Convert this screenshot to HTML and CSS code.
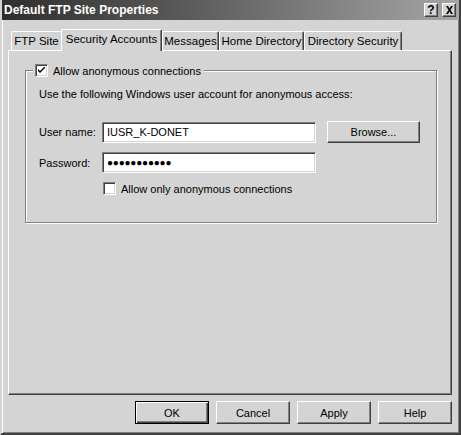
FILE: index.html
```html
<!DOCTYPE html>
<html lang="en">

<head>
    <meta charset="UTF-8">
    <title>Default FTP Site Properties</title>
    <link rel="stylesheet" href="styles.css">
</head>

<body>

    <div class="window">
        <div class="titlebar">
            <span class="titleText">Default FTP Site Properties</span>
            <div class="titleButtons">
                <span class="titleButton">?</span>
                <span class="titleButton">
                    <svg width="9" height="8" viewBox="0 0 9 8">
                        <path d="M1 0h2l1.5 2.5L6 0h2L5.5 4L8 8H6L4.5 5.5L3 8H1l2.5-4z" fill="#000"/>
                    </svg>
                </span>
            </div>
        </div>

        <div class="tabs">
            <div class="tab tabFirst">FTP Site</div>
            <div class="tab tabActive">Security Accounts</div>
            <div class="tab tabMessages">Messages</div>
            <div class="tab tabHome">Home Directory</div>
            <div class="tab tabDir">Directory Security</div>
        </div>

        <div class="panel">
            <div class="group">
                <div class="groupTitle">
                    <span class="check">
                        <svg width="7" height="7" viewBox="0 0 7 7">
                            <path d="M0 2l2 2 5-5v2L2 6 0 4z" fill="#000"/>
                        </svg>
                    </span>
                    <span>Allow anonymous connections</span>
                </div>
                <div class="intro">Use the following Windows user account for anonymous access:</div>
                <div class="row">
                    <label class="label">User name:</label>
                    <div class="input">IUSR_K-DONET</div>
                    <div class="button browse">Browse...</div>
                </div>
                <div class="row">
                    <label class="label">Password:</label>
                    <div class="input dots">&#9679;&#9679;&#9679;&#9679;&#9679;&#9679;&#9679;&#9679;&#9679;&#9679;&#9679;</div>
                </div>
                <div class="onlyRow">
                    <span class="check"></span>
                    <span>Allow only anonymous connections</span>
                </div>
            </div>
        </div>

        <div class="footer">
            <div class="button default">OK</div>
            <div class="button">Cancel</div>
            <div class="button">Apply</div>
            <div class="button">Help</div>
        </div>
    </div>

</body>

</html>
```

FILE: styles.css
```css
body {
    margin: 0;
    background: #d4d4d4;
    font-family: 'Liberation Sans', Arial, sans-serif;
    font-size: 11px;
    color: #000;
}

.window {
    width: 461px;
    height: 435px;
    box-sizing: border-box;
    background: #d4d4d4;
    border-left: 2px solid #d4d4d4;
    border-bottom: 2px solid #404040;
    border-right: 2px solid #404040;
    box-shadow: inset 1px 0 0 #ffffff, inset -1px -1px 0 #808080;
    display: flex;
    flex-direction: column;
    overflow: hidden;
}

.titlebar {
    height: 20px;
    margin: 0 -2px 0 -2px;
    background: linear-gradient(to right, #2e2e2e, #5a5a5a 40%, #a6a6a6);
    display: flex;
    align-items: center;
    justify-content: space-between;
    padding: 0 5px 0 4px;
}

.titleText {
    color: #ffffff;
    font-weight: bold;
    font-size: 12px;
}

.titleButtons {
    display: flex;
    gap: 4px;
}

.titleButton {
    width: 14px;
    height: 14px;
    box-sizing: border-box;
    background: #d4d4d4;
    border-top: 1px solid #ffffff;
    border-left: 1px solid #ffffff;
    border-right: 1px solid #404040;
    border-bottom: 1px solid #404040;
    box-shadow: inset -1px -1px 0 #808080;
    display: flex;
    align-items: center;
    justify-content: center;
    font-weight: bold;
    font-size: 12px;
    line-height: 1;
}

.tabs {
    display: flex;
    align-items: flex-end;
    height: 22px;
    margin: 8px 0 0 9px;
    position: relative;
    z-index: 1;
}

.tab {
    height: 19px;
    box-sizing: border-box;
    border-top: 1px solid #ffffff;
    border-left: 1px solid #ffffff;
    border-right: 1px solid #404040;
    box-shadow: inset -1px 0 0 #808080;
    border-radius: 2px 2px 0 0;
    display: flex;
    align-items: center;
    justify-content: center;
    font-size: 11.5px;
}

.tabFirst {
    width: 50px;
    border-right: none;
    box-shadow: none;
}

.tabActive {
    width: 101px;
    height: 22px;
    margin-bottom: -1px;
    background: #d4d4d4;
    padding-bottom: 3px;
}

.tabMessages {
    width: 57px;
}

.tabHome {
    width: 85px;
}

.tabDir {
    width: 98px;
}

.panel {
    margin-left: 6px;
    width: 444px;
    height: 345px;
    box-sizing: border-box;
    border-top: 1px solid #ffffff;
    border-left: 1px solid #ffffff;
    border-right: 1px solid #404040;
    border-bottom: 1px solid #404040;
    box-shadow: inset -1px -1px 0 #808080;
    padding: 19px 14px 0 16px;
}

.group {
    height: 153px;
    box-sizing: border-box;
    border: 1px solid #808080;
    box-shadow: inset 1px 1px 0 #ffffff, 1px 1px 0 #ffffff;
    padding: 0 0 0 13px;
}

.groupTitle {
    display: flex;
    align-items: center;
    gap: 5px;
    width: fit-content;
    margin: -7px 0 0 -6px;
    padding: 0 3px 0 2px;
    background: #d4d4d4;
    height: 13px;
}

.check {
    width: 13px;
    height: 13px;
    box-sizing: border-box;
    background: #ffffff;
    border-top: 1px solid #808080;
    border-left: 1px solid #808080;
    border-right: 1px solid #ffffff;
    border-bottom: 1px solid #ffffff;
    box-shadow: inset 1px 1px 0 #404040, inset -1px -1px 0 #d4d4d4;
    display: flex;
    align-items: center;
    justify-content: center;
}

.intro {
    margin-top: 11px;
}

.row {
    display: flex;
    align-items: center;
    margin-top: 21px;
}

.row + .row {
    margin-top: 9px;
}

.label {
    width: 63px;
}

.input {
    width: 214px;
    height: 21px;
    box-sizing: border-box;
    background: #ffffff;
    border-top: 1px solid #808080;
    border-left: 1px solid #808080;
    border-right: 1px solid #ffffff;
    border-bottom: 1px solid #ffffff;
    box-shadow: inset 1px 1px 0 #404040, inset -1px -1px 0 #d4d4d4;
    padding-left: 4px;
    display: flex;
    align-items: center;
}

.dots {
    font-size: 10px;
    letter-spacing: -0.2px;
}

.button {
    width: 74px;
    height: 23px;
    box-sizing: border-box;
    background: #d4d4d4;
    border-top: 1px solid #ffffff;
    border-left: 1px solid #ffffff;
    border-right: 1px solid #404040;
    border-bottom: 1px solid #404040;
    box-shadow: inset -1px -1px 0 #808080;
    display: flex;
    align-items: center;
    justify-content: center;
}

.browse {
    width: 93px;
    height: 22px;
    margin-left: 11px;
}

.onlyRow {
    display: flex;
    align-items: center;
    gap: 5px;
    margin: 9px 0 0 64px;
}

.footer {
    display: flex;
    justify-content: flex-end;
    gap: 7px;
    margin: 6px 7px 0 0;
}

.default {
    border: 1px solid #000000;
    box-shadow: inset 1px 1px 0 #ffffff, inset -1px -1px 0 #404040, inset -2px -2px 0 #808080;
}
```
